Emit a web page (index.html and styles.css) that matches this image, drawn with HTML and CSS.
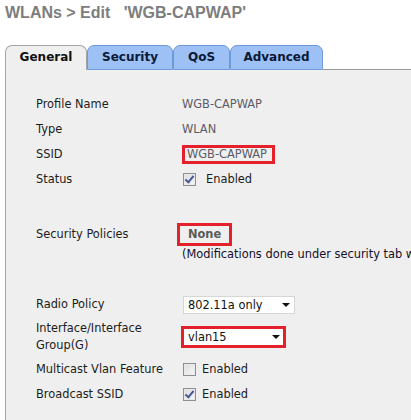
FILE: index.html
```html
<!DOCTYPE html>
<html lang="en">
<head>
    <meta charset="UTF-8">
    <title>WLANs &gt; Edit</title>
    <link rel="stylesheet" href="styles.css">
</head>
<body>
    <h1 class="page-title">WLANs &gt; Edit &nbsp;&nbsp;'WGB-CAPWAP'</h1>

    <div class="tabs">
        <div class="tab tab-general active">General</div>
        <div class="tab tab-security">Security</div>
        <div class="tab tab-qos">QoS</div>
        <div class="tab tab-advanced">Advanced</div>
        <div class="tab-fill"></div>
    </div>

    <div class="panel">
        <div class="row">
            <div class="label">Profile Name</div>
            <div class="value muted">WGB-CAPWAP</div>
        </div>
        <div class="row">
            <div class="label">Type</div>
            <div class="value muted">WLAN</div>
        </div>
        <div class="row">
            <div class="label">SSID</div>
            <div class="value"><span class="mark mark-ssid muted">WGB-CAPWAP</span></div>
        </div>
        <div class="row">
            <div class="label">Status</div>
            <div class="value">
                <span class="check checked"></span>
                <span class="check-text wide">Enabled</span>
            </div>
        </div>

        <div class="row row-policies">
            <div class="label">Security Policies</div>
            <div class="value stack">
                <span class="mark mark-none">None</span>
                <span class="note">(Modifications done under security tab will appear after applying the changes.)</span>
            </div>
        </div>

        <div class="row row-radio">
            <div class="label">Radio Policy</div>
            <div class="value">
                <div class="select select-radio">802.11a only</div>
            </div>
        </div>
        <div class="row row-iface">
            <div class="label">Interface/Interface<br>Group(G)</div>
            <div class="value">
                <div class="mark mark-select">
                    <div class="select select-vlan">vlan15</div>
                </div>
            </div>
        </div>
        <div class="row">
            <div class="label">Multicast Vlan Feature</div>
            <div class="value">
                <span class="check"></span>
                <span class="check-text">Enabled</span>
            </div>
        </div>
        <div class="row">
            <div class="label">Broadcast SSID</div>
            <div class="value">
                <span class="check checked"></span>
                <span class="check-text">Enabled</span>
            </div>
        </div>
    </div>
</body>
</html>
```

FILE: styles.css
```css
/* General */
body {
    margin: 0;
    font-family: 'DejaVu Sans', Verdana, sans-serif;
    font-size: 11.4px;
    color: #1c1c1c;
    background-color: #FFFFFF;
    overflow: hidden;
    height: 420px;
}

.page-title {
    margin: 3px 0 0 5px;
    font-family: 'Liberation Sans', Arial, sans-serif;
    font-size: 16px;
    line-height: 20px;
    font-weight: bold;
    color: #7d7d7d;
    white-space: nowrap;
}

/* Tabs */
.tabs {
    display: flex;
    margin-top: 22px;
    padding-left: 5px;
    height: 25px;
}

.tab {
    box-sizing: border-box;
    height: 25px;
    padding-top: 3px;
    font-size: 12px;
    line-height: 16px;
    font-weight: bold;
    text-align: center;
    color: #0c1936;
    background-color: #9dc0f5;
    border: 1px solid #6f9ad9;
    border-radius: 7px 7px 0 0;
}

.tab.active {
    color: #111111;
    background-color: #efefef;
    border-color: #a5a5a5;
    border-bottom: none;
}

.tab-general { width: 82px; }
.tab-security { width: 86px; }
.tab-qos { width: 57px; }
.tab-advanced { width: 93px; }

.tab-fill {
    flex: 1;
    border-bottom: 1px solid #9a9a9a;
}

/* Panel */
.panel {
    box-sizing: border-box;
    height: 350px;
    margin-left: 5px;
    padding: 22px 0 0 30px;
    background-color: #efefef;
    border-left: 1px solid #a3a3a3;
    white-space: nowrap;
}

.row {
    display: grid;
    grid-template-columns: 146px 1fr;
    align-items: center;
    min-height: 25px;
    line-height: 17px;
}

.value {
    display: flex;
    align-items: center;
}

.muted {
    color: #5c5c68;
}

.mark {
    box-sizing: border-box;
    border: 3px solid #e4202a;
}

.mark-ssid {
    height: 19px;
    line-height: 13px;
    padding: 0 5px 0 2px;
}

.row-policies {
    margin-top: 31px;
    align-items: start;
}

.row-policies .label {
    padding-top: 3px;
}

.stack {
    flex-direction: column;
    align-items: flex-start;
}

.mark-none {
    height: 23px;
    margin-left: -5px;
    padding: 0 8px;
    line-height: 17px;
    font-weight: bold;
    color: #5a5a5a;
}

.note {
    color: #160f2c;
    line-height: 16px;
}

/* Selects */
.row-radio {
    margin-top: 30px;
}

.row-iface {
    min-height: 40px;
}

.select {
    position: relative;
    box-sizing: border-box;
    padding-left: 4px;
    background-color: #FFFFFF;
    color: #111111;
}

.select::after {
    content: "";
    position: absolute;
    top: 50%;
    margin-top: -2px;
    border-left: 4px solid transparent;
    border-right: 4px solid transparent;
    border-top: 4px solid #111111;
}

.select-radio {
    width: 112px;
    height: 18px;
    line-height: 16px;
    margin-left: 1px;
    border: 1px solid #d6d6d6;
}

.select-radio::after {
    right: 4px;
}

.mark-select {
    margin-left: -1px;
}

.select-vlan {
    width: 99px;
    height: 16px;
    line-height: 16px;
}

.select-vlan::after {
    right: 3px;
}

/* Checkboxes */
.check {
    box-sizing: border-box;
    width: 13px;
    height: 13px;
    margin-left: 1px;
    border: 1px solid #8e8f96;
    background: linear-gradient(135deg, #dcdcdc, #f7f7f7);
    box-shadow: inset 0 0 0 1px #eaeaea;
    position: relative;
}

.check.checked::after {
    content: "";
    position: absolute;
    left: 3px;
    top: 0px;
    width: 3px;
    height: 7px;
    border-right: 2px solid #4b5897;
    border-bottom: 2px solid #4b5897;
    transform: rotate(40deg);
}

.check-text {
    margin-left: 6px;
}

.check-text.wide {
    margin-left: 10px;
}
```
